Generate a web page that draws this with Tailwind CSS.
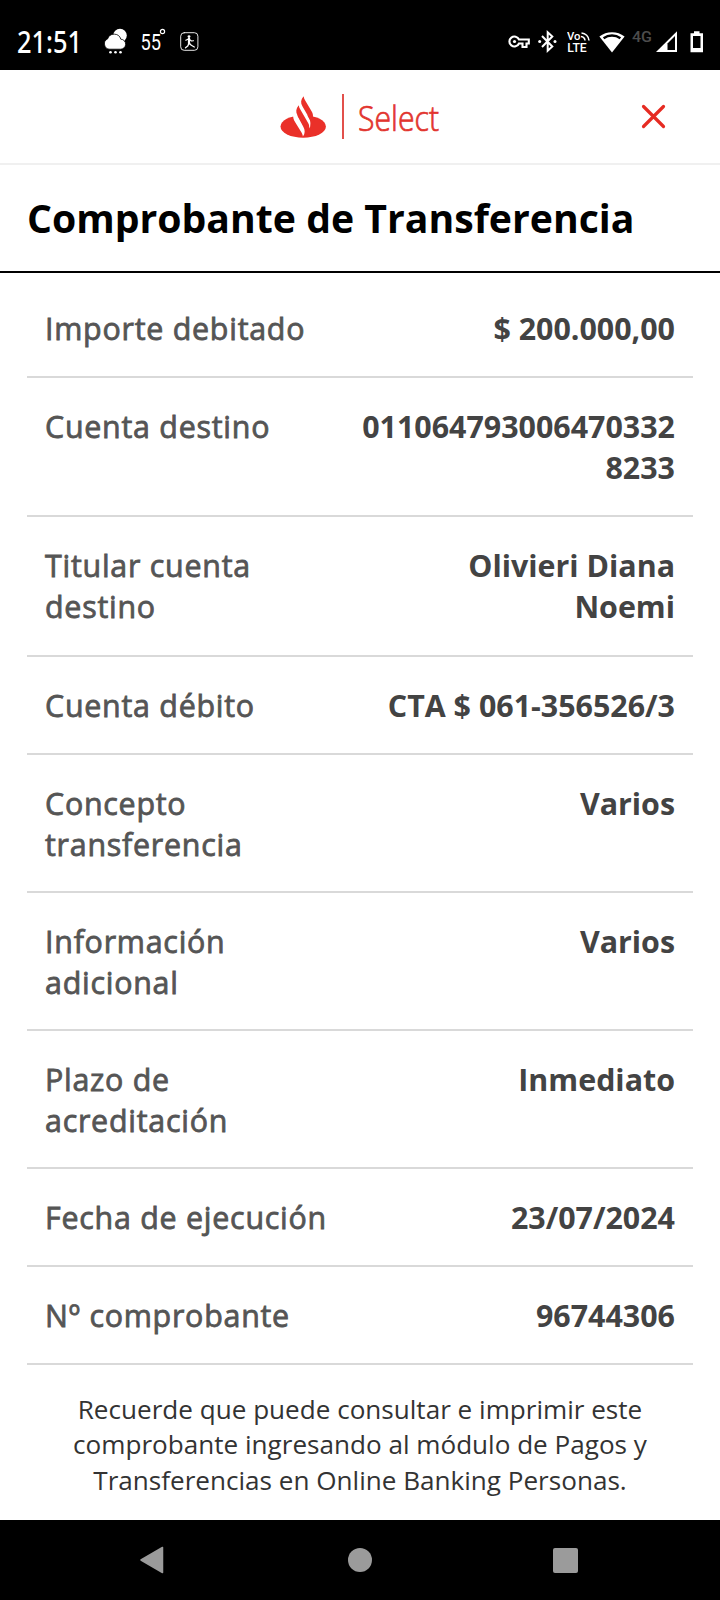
<!DOCTYPE html>
<html lang="es">
<head>
<meta charset="utf-8">
<title>Comprobante de Transferencia</title>
<script src="https://cdn.jsdelivr.net/npm/@tailwindcss/browser@4"></script>
</head>
<body class="w-[720px] h-[1600px] overflow-hidden bg-white font-['Open_Sans',sans-serif] flex flex-col">
  <!-- Status bar -->
  <div class="h-[70px] shrink-0 bg-black flex items-start justify-between pt-[28px] pl-[17px] pr-[16px]">
    <div class="flex items-start">
      <svg class="w-[64px] h-[28px] overflow-visible" viewBox="0 0 64 28" fill="#fff" font-family="Noto Sans, sans-serif"><text x="0" y="25" font-size="30" font-weight="500" textLength="65" lengthAdjust="spacingAndGlyphs">21:51</text></svg>
      <svg class="w-[24px] h-[28px] ml-[23px]" viewBox="0 0 24 28" fill="#fff">
        <circle cx="16" cy="7.500" r="6.800"/>
        <path d="M5.800 21.200a5.400 5.400 0 0 1-2.200-10.300A6.900 6.900 0 0 1 16.800 11.200a5 5 0 0 1-.3 10z" stroke="#000" stroke-width=".8"/>
        <circle cx="6.500" cy="24.200" r="1.300"/><circle cx="11.500" cy="24.200" r="1.300"/><circle cx="16.500" cy="24.200" r="1.300"/>
      </svg>
      <svg class="w-[27px] h-[28px] ml-[12px]" viewBox="0 0 27 28" fill="#fff" font-family="Roboto, sans-serif"><text x="0.500" y="22" font-size="22.500" textLength="20.500" lengthAdjust="spacingAndGlyphs">55</text><circle cx="22.500" cy="3.500" r="2.100" fill="none" stroke="#fff" stroke-width="1.200"/></svg>
      <svg class="w-[19px] h-[20px] ml-[13px] mt-[4px]" viewBox="0 0 19 20" fill="none" stroke="#fff" stroke-linecap="round" stroke-linejoin="round">
        <rect x="0.700" y="0.700" width="17.200" height="17.600" rx="3.500" stroke-width=".9"/>
        <circle cx="9" cy="4.600" r="1.400" fill="#fff" stroke="none"/>
        <path d="M9 6.500v5" stroke-width="2.200"/><path d="M8.500 7L5.800 8.300M9.500 7.500l2 1.500 2-.3" stroke-width="1.100"/>
        <path d="M8.800 11.500L7.800 14 5.500 15.800M9.500 11.500l1.800 1.800 3 1.700" stroke-width="1.300"/>
      </svg>
    </div>
    <div class="flex items-start">
      <svg class="w-[22px] h-[26px]" viewBox="0 0 22 26" fill="none" stroke="#fff" stroke-width="2.100">
        <path d="M11 11.500h9.800v4H18.500V19h-4v-3.500H11a5 5 0 1 1 0-4z"/><circle cx="6.500" cy="13.500" r="1.600" fill="#fff" stroke="none"/>
      </svg>
      <svg class="w-[19px] h-[26px] ml-[8px]" viewBox="0 0 19 26" fill="none" stroke="#fff" stroke-width="2">
        <path d="M4 8l10.300 10.500-4.600 4.200V4.300L14.300 8.500 4 19"/><circle cx="1.700" cy="13.500" r="1.500" fill="#fff" stroke="none"/><circle cx="17" cy="13.500" r="1.500" fill="#fff" stroke="none"/>
      </svg>
      <svg class="w-[24px] h-[26px] ml-[10px]" viewBox="0 0 24 26" fill="#fff" font-family="Roboto, sans-serif" font-weight="500">
        <text x="0" y="12.200" font-size="11.500" textLength="13.500" lengthAdjust="spacingAndGlyphs">Vo</text>
        <text x="0.300" y="24" font-size="12" textLength="19.500" lengthAdjust="spacingAndGlyphs">LTE</text>
        <path d="M14 8.500a4.500 4.500 0 0 1 4 4M14.500 5a8.500 8.500 0 0 1 7.500 7.500" fill="none" stroke="#fff" stroke-width="1.600"/>
      </svg>
      <svg class="w-[26px] h-[26px] ml-[8px]" viewBox="0 0 26 26">
        <path d="M13 24.500L.4 8.600a20 20 0 0 1 25.200 0z" fill="#fff"/><path d="M4.600 10.200a14.500 14.500 0 0 1 16.800 0" fill="none" stroke="#000" stroke-width="2.400"/>
      </svg>
      <svg class="w-[20px] h-[26px] ml-[7px]" viewBox="0 0 20 26" fill="#4c4c4c" font-family="Roboto, sans-serif" font-weight="500"><text x="0" y="14" font-size="15" textLength="20" lengthAdjust="spacingAndGlyphs">4G</text></svg>
      <svg class="w-[22px] h-[26px] ml-[4px]" viewBox="0 0 22 26"><path d="M0 24L21 3.200V24z" fill="#fff"/><path d="M11.500 22V15.500L19 8V22z" fill="#000"/></svg>
      <svg class="w-[14px] h-[26px] ml-[12px]" viewBox="0 0 14 26" fill="none"><path d="M4 3.200h5.500v2H13V24.200H.5V5.200H4z" fill="#fff"/><path d="M3 8h7.500v12H3z" fill="#000"/></svg>
    </div>
  </div>

  <!-- App header -->
  <header class="h-[95px] shrink-0 border-b-2 border-[#f0f0f0] flex items-start justify-between pl-[280px] pr-[54px]">
    <div class="flex items-start pt-[24px]">
      <svg class="w-[46px] h-[45px]" viewBox="0 0 46 45">
        <ellipse cx="23.200" cy="32.500" rx="22.700" ry="11.200" fill="#ea3029"/>
        <path d="M13 19.500C13 24 13.700 25.800 15.200 28.200l6 9.800c.9 1.500 1.500 2.800 1.700 4.500 2.300-3 2.300-6.500.4-9.800L16.500 20z" fill="#fff"/>
        <path d="M18.500 14L28 30.500c.7 1.200 1 2.400 1 4 2.300-3 2.200-6.300.5-9.300L22 12z" fill="#fff"/>
        <path d="M18.800 11.200c-2.900 3.300-3.300 6.600-1.300 10.300l6.500 11 3 5 2-3c.5-2.500 0-4-1-5.700l-7.800-13.500c-.8-1.300-1.200-2.500-1.400-4.100z" fill="#ea3029"/>
        <path d="M23.600 2.200c-2.900 3.300-3.200 6.400-1.200 10l6.900 12c1.500 2.600 1.600 5.300.9 8l6-8-3.300-.5c.4-2.600-.2-4.400-1.200-6.200L25.200 6.500c-.8-1.300-1.400-2.600-1.600-4.300z" fill="#ea3029"/>
      </svg>
      <div class="w-[2px] h-[45px] ml-[16px] bg-[#e2504b]"></div>
      <svg class="w-[84px] h-[46px] ml-[14px] overflow-visible" viewBox="0 0 84 46" fill="#e2342e" font-family="Open Sans, sans-serif"><text x="0" y="36.500" font-size="34" font-weight="300" stroke="#e2342e" stroke-width=".7" textLength="81" lengthAdjust="spacingAndGlyphs">Select</text></svg>
    </div>
    <svg class="w-[25px] h-[25px] mt-[34px]" viewBox="0 0 25 25" stroke="#e62b22" stroke-width="3.200" stroke-linecap="round"><path d="M2.500 2.500l20 20M22.500 2.500l-20 20"/></svg>
  </header>

  <h1 class="h-[108px] shrink-0 border-b-2 border-black pl-[27px] pt-[26px] text-[39.2px] leading-[54px] font-bold text-black whitespace-nowrap">Comprobante de Transferencia</h1>

  <main class="px-[27px] pt-[7px] shrink-0 text-[30.4px] leading-[41.2px] text-[#555]">
    <div class="h-[98px] border-b-2 border-[#d9d9d9] px-[18px] pt-[28px] flex justify-between"><span class="tracking-[0.75px] [-webkit-text-stroke:0.8px_#555]">Importe debitado</span><b class="text-right font-bold text-[#434343]">$ 200.000,00</b></div>
    <div class="h-[139px] border-b-2 border-[#d9d9d9] px-[18px] pt-[28px] flex justify-between"><span class="tracking-[0.75px] [-webkit-text-stroke:0.8px_#555]">Cuenta destino</span><b class="text-right font-bold text-[#434343]">011064793006470332<br>8233</b></div>
    <div class="h-[140px] border-b-2 border-[#d9d9d9] px-[18px] pt-[28px] flex justify-between"><span class="tracking-[0.75px] [-webkit-text-stroke:0.8px_#555]">Titular cuenta<br>destino</span><b class="text-right font-bold text-[#434343]">Olivieri Diana<br>Noemi</b></div>
    <div class="h-[98px] border-b-2 border-[#d9d9d9] px-[18px] pt-[28px] flex justify-between"><span class="tracking-[0.75px] [-webkit-text-stroke:0.8px_#555]">Cuenta débito</span><b class="text-right font-bold text-[#434343]">CTA $ 061-356526/3</b></div>
    <div class="h-[138px] border-b-2 border-[#d9d9d9] px-[18px] pt-[27.5px] flex justify-between"><span class="tracking-[0.75px] [-webkit-text-stroke:0.8px_#555]">Concepto<br>transferencia</span><b class="text-right font-bold text-[#434343]">Varios</b></div>
    <div class="h-[138px] border-b-2 border-[#d9d9d9] px-[18px] pt-[27.5px] flex justify-between"><span class="tracking-[0.75px] [-webkit-text-stroke:0.8px_#555]">Información<br>adicional</span><b class="text-right font-bold text-[#434343]">Varios</b></div>
    <div class="h-[138px] border-b-2 border-[#d9d9d9] px-[18px] pt-[27.5px] flex justify-between"><span class="tracking-[0.75px] [-webkit-text-stroke:0.8px_#555]">Plazo de<br>acreditación</span><b class="text-right font-bold text-[#434343]">Inmediato</b></div>
    <div class="h-[98px] border-b-2 border-[#d9d9d9] px-[18px] pt-[28px] flex justify-between"><span class="tracking-[0.75px] [-webkit-text-stroke:0.8px_#555]">Fecha de ejecución</span><b class="text-right font-bold text-[#434343]">23/07/2024</b></div>
    <div class="h-[98px] border-b-2 border-[#d9d9d9] px-[18px] pt-[28px] flex justify-between"><span class="tracking-[0.75px] [-webkit-text-stroke:0.8px_#555]">Nº comprobante</span><b class="text-right font-bold text-[#434343]">96744306</b></div>
  </main>

  <p class="pt-[27px] text-center text-[26.1px] leading-[35.4px] text-[#333] grow">Recuerde que puede consultar e imprimir este<br>comprobante ingresando al módulo de Pagos y<br>Transferencias en Online Banking Personas.</p>

  <!-- Navigation bar -->
  <nav class="h-[80px] shrink-0 bg-black flex items-center justify-between pl-[139px] pr-[142px]">
    <svg class="w-[26px] h-[28px]" viewBox="0 0 26 28"><path d="M2 14L23.500 1.500v25z" fill="#9b9b9b" stroke="#9b9b9b" stroke-width="1.500" stroke-linejoin="round"/></svg>
    <div class="size-[24px] rounded-full bg-[#9b9b9b] ml-[2px]"></div>
    <div class="size-[25px] rounded-[2px] bg-[#9b9b9b]"></div>
  </nav>
</body>
</html>
